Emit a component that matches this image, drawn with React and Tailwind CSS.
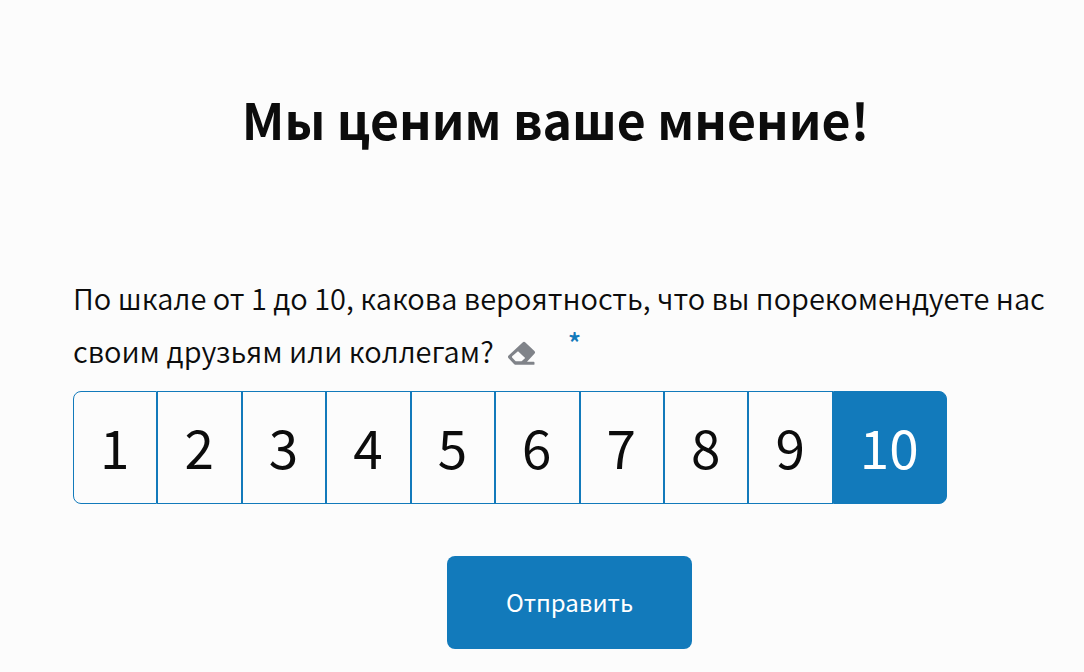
import React, { useState } from "react";

const SCORES = [1, 2, 3, 4, 5, 6, 7, 8, 9, 10];

const EraserIcon = () => (
	<svg
		viewBox="0 0 28 24"
		className="w-7 h-6"
		fill="currentColor"
		aria-hidden="true"
	>
		<path
			fillRule="evenodd"
			d="M14.6 1.4a2 2 0 0 1 2.8 0l9 8.6a1.9 1.9 0 0 1 0 2.7L19 20.8h6.6a.9.9 0 0 1 .9.9v1.2a.9.9 0 0 1-.9.9H8.2a3 3 0 0 1-2.2-.9L.6 17.2a2 2 0 0 1 0-2.8zM10 10.2L4.4 15a1.2 1.2 0 0 0-.1 1.7l2.9 3.1a1.6 1.6 0 0 0 1.2.5h4.4a1.6 1.6 0 0 0 1.1-.4l3.3-3z"
		/>
	</svg>
);

const App = () => {
	const [score, setScore] = useState(10);

	return (
		<main className="min-h-screen bg-[#fcfcfc] text-[#0c0c0c] font-['Noto_Sans_CJK_SC',sans-serif]">
			<form
				className="pt-[84px] pl-[73px] pr-4.5"
				onSubmit={(e) => e.preventDefault()}
			>
				<h1 className="pr-7 text-center text-[50px] leading-[68px] font-bold">
					Мы ценим ваше мнение!
				</h1>

				<fieldset className="mt-[119px]">
					<legend className="text-[29px] leading-[53px] font-[350]">
						По шкале от 1 до 10, какова вероятность, что вы порекомендуете нас
						своим друзьям или коллегам?
						<button
							type="button"
							aria-label="Очистить"
							onClick={() => setScore(null)}
							className="ml-3.5 pb-1 align-middle text-[#808389]"
						>
							<EraserIcon />
						</button>
						<span className="ml-8 align-top text-[28px] leading-9 font-medium text-[#127abb]">
							*
						</span>
					</legend>

					<div className="mt-3.5 flex">
						{SCORES.map((value) => (
							<label
								key={value}
								className="cursor-pointer border border-[#127abb] pl-[26px] pr-[27px] pb-0.5 text-[53px] leading-[109px] first:rounded-l-lg last:rounded-r-lg has-checked:bg-[#127abb] has-checked:text-white"
							>
								<input
									type="radio"
									name="score"
									value={value}
									checked={score === value}
									onChange={() => setScore(value)}
									className="sr-only"
								/>
								{value}
							</label>
						))}
					</div>
				</fieldset>

				<div className="mt-13 flex justify-center pb-5">
					<button
						type="submit"
						className="rounded-lg bg-[#127abb] px-[59px] pb-0.5 text-2xl leading-[91px] text-white"
					>
						Отправить
					</button>
				</div>
			</form>
		</main>
	);
};

export default App;
